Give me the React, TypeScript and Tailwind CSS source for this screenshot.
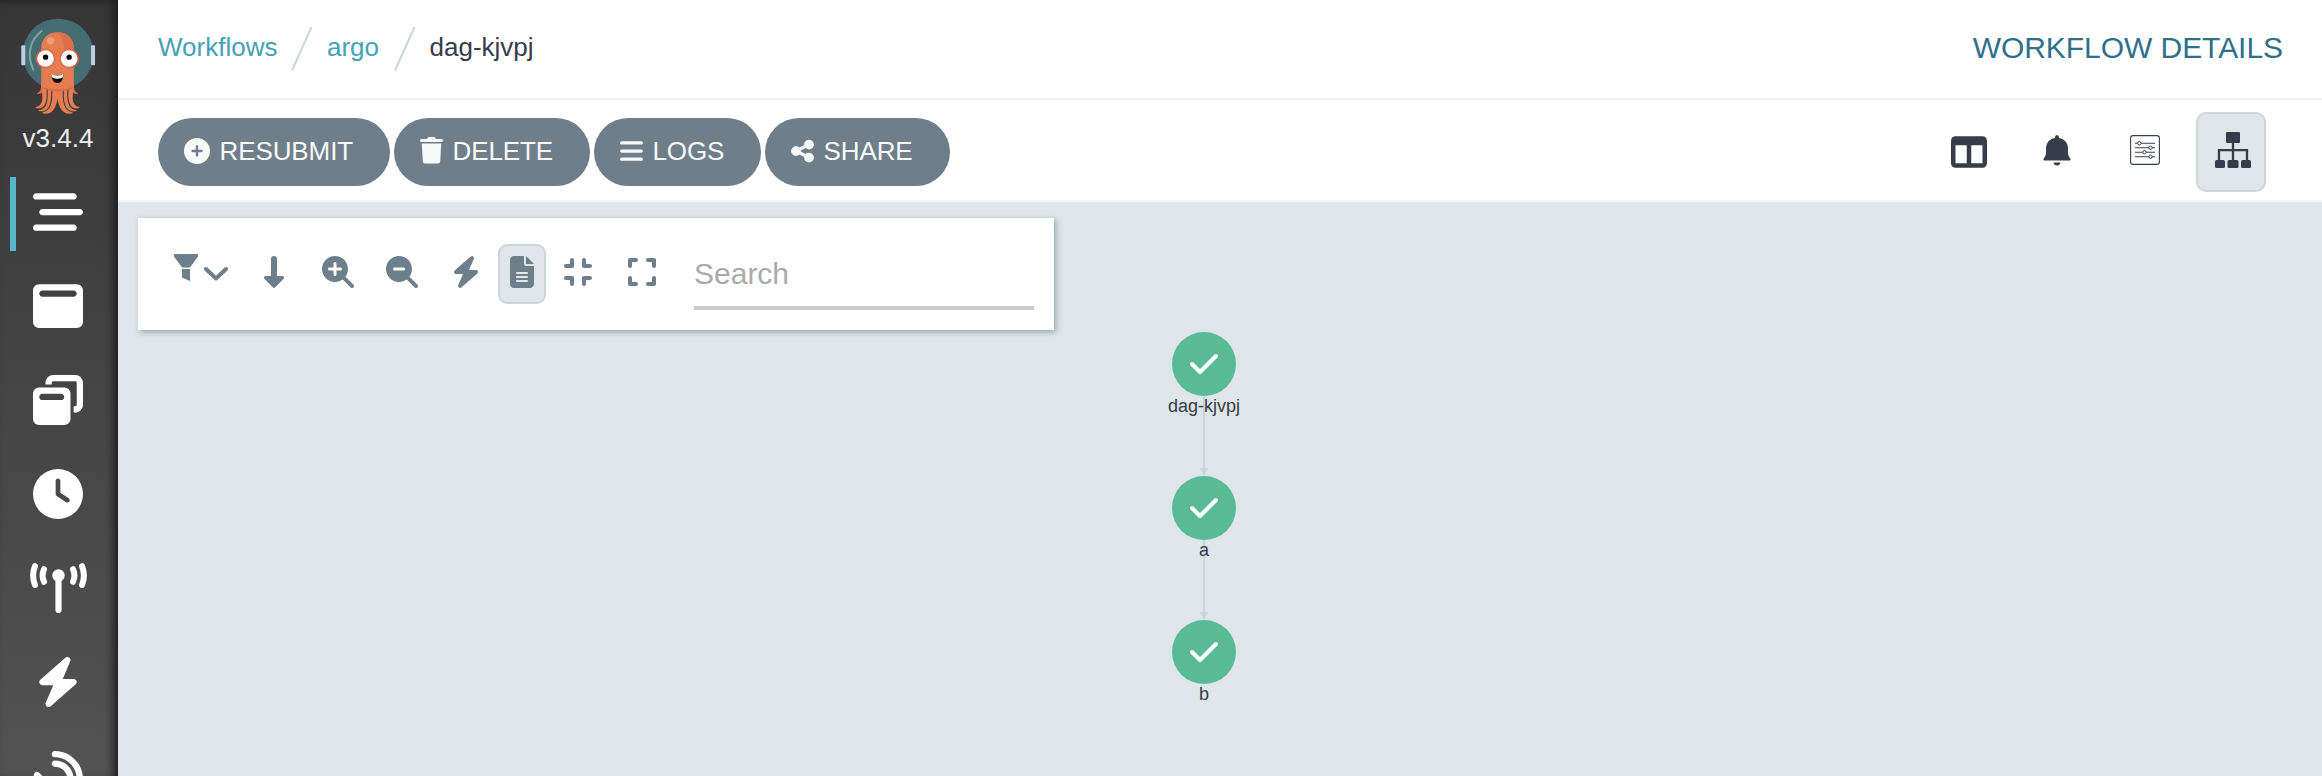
import type { ComponentType, ReactNode } from 'react';
import {
  FaBars,
  FaBarsStaggered,
  FaBolt,
  FaCirclePlus,
  FaClock,
  FaCompress,
  FaExpand,
  FaFileLines,
  FaMagnifyingGlassMinus,
  FaMagnifyingGlassPlus,
  FaSatelliteDish,
  FaShareNodes,
  FaTableColumns,
  FaWindowMaximize,
  FaWindowRestore,
} from 'react-icons/fa6';

function Tentacles() {
  return (
    <>
      <path d="M123 255C123 268 119 277 110 280C117 284 126 281 130 270Z" fill="#dc6849" />
      <path d="M123 250V262C128 292 131 316 106 321V324C136 331 141 306 139 266V250Z" />
      <path d="M137 250L142 266C144 302 142 328 115 330V333C150 339 154 308 153 266V250Z" />
      <path d="M150 250L156 266C158 308 152 333 127 337V340C158 346 168 322 173 292V250Z" />
    </>
  );
}

function Logo() {
  return (
    <svg viewBox="60 50 230 295" className="mt-[17px] ml-[20px] h-[98px] w-[77px] shrink-0">
      <circle cx="174" cy="162" r="107" fill="#486a78" />
      <circle cx="174" cy="162" r="102" fill="#466e70" />
      <rect x="63" y="135" width="12" height="60" rx="3" fill="#bccfe6" />
      <rect x="273" y="135" width="12" height="60" rx="3" fill="#bccfe6" />
      <path d="M124 92C86 122 80 168 99 208" fill="none" stroke="#79a8a3" strokeWidth="6" strokeLinecap="round" />
      <g fill="#e57d51">
        <path d="M123 146C123 114 143 96 172 96S221 114 221 146V266H123Z" />
        <Tentacles />
        <g transform="matrix(-1 0 0 1 344 0)">
          <Tentacles />
        </g>
      </g>
      <path d="M172 96C201 96 221 114 221 146V160L192 146C191 124 186 108 172 96Z" fill="#dc6f4b" />
      <path d="M124 263Q172 279 220 263" fill="none" stroke="#dc6849" strokeWidth="5" />
      <circle cx="151" cy="121" r="11" fill="#ee9d80" />
      <circle cx="135" cy="175" r="29" fill="#dc5f45" />
      <circle cx="208" cy="175" r="29" fill="#dc5f45" />
      <circle cx="136" cy="175" r="25" fill="#fff" />
      <circle cx="207" cy="175" r="25" fill="#fff" />
      <circle cx="136" cy="171" r="8" fill="#000" />
      <circle cx="207" cy="171" r="8" fill="#000" />
      <path d="M153 221Q172 233 190 221C189 239 182 249 172 249S154 239 153 221Z" fill="#000" />
      <path d="M153 221Q172 233 190 221L188 231Q172 241 155 231Z" fill="#fff" />
    </svg>
  );
}

function Antenna({ className }: { className?: string }) {
  return (
    <svg viewBox="0 0 57 50" className={className} fill="none" stroke="currentColor" strokeWidth="6" strokeLinecap="round">
      <path d="M5 3.200Q1.200 12.500 5 22M52 3.200Q55.800 12.500 52 22" />
      <path d="M14 6.200Q11.200 12.500 14 18.800M43 6.200Q45.800 12.500 43 18.800" />
      <path d="M28.500 14V47" strokeWidth="6.200" />
      <circle cx="28.500" cy="12.500" r="6.200" fill="currentColor" stroke="none" />
    </svg>
  );
}

const navItems: ComponentType<{ className?: string }>[] = [
  FaBarsStaggered,
  FaWindowMaximize,
  FaWindowRestore,
  FaClock,
  Antenna,
  FaBolt,
  FaSatelliteDish,
];

function Sidebar() {
  return (
    <nav className="flex h-[776px] w-[118px] shrink-0 flex-col overflow-hidden bg-gradient-to-b from-[#363636] to-[#535353] shadow-[inset_-10px_0_10px_-6px_#1c1c1c,inset_0_6px_8px_-6px_#222]">
      <Logo />
      <div className="mt-[7px] h-[43px] w-[116px] shrink-0 text-center text-[26px] leading-[32px] text-[#eef1f4]">v3.4.4</div>
      {navItems.map((NavIcon, i) => (
        <div key={i} className="flex h-[94px] shrink-0 items-center">
          <div className={i === 0 ? 'ml-[10px] mt-[4px] h-[74px] w-[6px] bg-[#5ab7cb]' : 'ml-[10px] h-[74px] w-[6px]'} />
          <div className="flex w-[84px] justify-center">
            <NavIcon className="h-[50px] w-auto text-white" />
          </div>
        </div>
      ))}
    </nav>
  );
}

function Slash() {
  return (
    <svg viewBox="0 0 22 46" className="h-[46px] w-[22px]">
      <path d="M1 44.5L20.5 1" stroke="#ccd6dd" strokeWidth="2" />
    </svg>
  );
}

function Trash({ className }: { className?: string }) {
  return (
    <svg viewBox="0 0 23 27" className={className} fill="currentColor">
      <path d="M7.500 1.200Q8 0 9 0H14Q15 0 15.500 1.200L16 2H21.500Q23 2 23 3.500T21.500 5H1.500Q0 5 0 3.500T1.500 2H7Z" />
      <path d="M1.800 6.500H21.200L20.200 24.500Q20.100 26.500 18 26.500H5Q2.900 26.500 2.800 24.500Z" />
    </svg>
  );
}

function Action({ width, icon, children }: { width: string; icon: ReactNode; children: string }) {
  return (
    <button className={`flex h-[68px] items-center rounded-full bg-[#6f7e89] pb-[3px] pl-[26px] text-[26px] text-[#f8fafa] ${width}`}>
      {icon}
      <span className="ml-[9.5px] pt-[2px] tracking-[-0.1px]">{children}</span>
    </button>
  );
}

function Bell() {
  return (
    <svg viewBox="0 0 28 31" className="h-[31px] w-[28px]" fill="#363c4a">
      <path d="M14 0Q16 0 16 2.500V3C22 4 25 8.500 25 14V18Q25 21 27.500 24Q28 25.500 26.500 25.500H1.500Q0 25.500 .5 24Q3 21 3 18V14C3 8.500 6 4 12 3V2.500Q12 0 14 0Z" />
      <path d="M10.500 27.500H17.500Q17 30.500 14 30.500T10.500 27.500Z" />
    </svg>
  );
}

function Sliders() {
  return (
    <svg viewBox="0 0 30 30" className="h-[30px] w-[30px]" fill="none" stroke="#363c4a">
      <rect x=".6" y=".6" width="28.800" height="28.800" rx="2.500" strokeWidth="1.100" />
      <path d="M5 8.300H25M5 12.700H25M5 17.200H25M5 21.700H25" strokeWidth="1.100" />
      <g fill="#fff" strokeWidth="1">
        <circle cx="9.300" cy="8.300" r="1.700" />
        <circle cx="20.500" cy="12.700" r="1.700" />
        <circle cx="14.500" cy="17.200" r="1.700" />
        <circle cx="20.500" cy="21.700" r="1.700" />
      </g>
    </svg>
  );
}

function Sitemap() {
  return (
    <svg viewBox="0 0 36 36" className="h-[36px] w-[36px]" fill="#363c4a">
      <rect x="11" y="0" width="14" height="11" rx="1" />
      <path d="M4 29V18.200H32V29M18 10V29" fill="none" stroke="#363c4a" strokeWidth="2.300" />
      <rect x="0" y="28" width="10" height="8" rx="1.500" />
      <rect x="12.500" y="28" width="11" height="8" rx="1.500" />
      <rect x="26" y="28" width="10" height="8" rx="1.500" />
    </svg>
  );
}

function Filter() {
  return (
    <svg viewBox="0 0 24 27" className="-mt-[9px] ml-[36px] h-[27px] w-[24px]" fill="currentColor">
      <path d="M0 0H24V2.500L16 13.500H8L0 2.500Z" />
      <path d="M8 15H16V27L8 23.500Z" />
    </svg>
  );
}

function Chevron() {
  return (
    <svg viewBox="0 0 24 14" className="mt-[3px] ml-[6px] h-[14px] w-[24px]" fill="none" stroke="currentColor">
      <path d="M2 2L12 11.500L22 2" strokeWidth="4" strokeLinecap="round" strokeLinejoin="round" />
    </svg>
  );
}

function ArrowDown() {
  return (
    <svg viewBox="0 0 20 32" className="ml-[36px] h-[32px] w-[20px]" fill="currentColor">
      <path d="M7 3Q7 0 10 0T13 3V20H18.500Q21 20.500 19.500 23L11.300 31.300Q10 32.500 8.700 31.300L.5 23Q-1 20.500 1.500 20H7Z" />
    </svg>
  );
}

function GraphPanel() {
  return (
    <div className="mt-[16px] ml-[20px] flex h-[112px] w-[916px] items-start bg-white text-[#6d7f8b] shadow-[2px_2px_6px_#8fa4b1]">
      <div className="flex h-[108px] items-center">
        <Filter />
        <Chevron />
        <ArrowDown />
        <FaMagnifyingGlassPlus className="ml-[38px] h-[32px] w-[32px]" />
        <FaMagnifyingGlassMinus className="ml-[32px] h-[32px] w-[32px]" />
        <FaBolt className="ml-[34px] h-[32px] w-[28px]" />
        <div className="mt-[4px] ml-[18px] flex h-[60px] w-[48px] justify-center rounded-[9px] border-2 border-[#ccd6dd] bg-[#dee6e9] pt-[10px]">
          <FaFileLines className="h-[32px] w-[24px]" />
        </div>
        <FaCompress className="ml-[18px] h-[32px] w-[28px]" />
        <FaExpand className="ml-[36px] h-[32px] w-[28px]" />
      </div>
      <input
        placeholder="Search"
        className="mt-[20px] ml-[38px] h-[72px] w-[340px] border-b-4 border-[#cacaca] bg-transparent pt-[4px] text-[30px] outline-none placeholder:text-[#aaaaaa]"
      />
    </div>
  );
}

function GraphNode({ label, place }: { label: string; place: string }) {
  return (
    <div className={`absolute left-[1036px] flex w-[100px] flex-col items-center ${place}`}>
      <svg viewBox="0 0 64 64" className="h-[64px] w-[64px]">
        <circle cx="32" cy="32" r="32" fill="#59ba97" />
        <path d="M20 32L28 40L44 24" fill="none" stroke="#fff" strokeWidth="4" strokeLinecap="round" strokeLinejoin="round" />
      </svg>
      <div className="text-[18px] leading-[20px] text-[#363c4a]">{label}</div>
    </div>
  );
}

function Edge({ place }: { place: string }) {
  return (
    <svg viewBox="0 0 8 80" className={`absolute left-[1082px] h-[80px] w-[8px] ${place}`} fill="#ccd4d8">
      <rect x="3" y="0" width="2" height="74" />
      <path d="M0 72H8L4 80Z" />
    </svg>
  );
}

export default function App() {
  return (
    <div className="flex h-[776px] w-[2322px] overflow-hidden bg-[#dee6e9] font-['Liberation_Sans',Arial,sans-serif]">
      <Sidebar />
      <main className="flex min-w-0 flex-1 flex-col">
        <header className="flex h-[100px] shrink-0 items-center justify-between border-b-2 border-[#edf2f6] bg-white pr-[39px] pl-[40px]">
          <div className="flex items-center text-[26px] text-[#45a1b4]">
            <a className="-mt-[3px] w-[133px]">Workflows</a>
            <Slash />
            <a className="-mt-[3px] ml-[14px] w-[67px]">argo</a>
            <Slash />
            <span className="-mt-[3px] ml-[13.500px] text-[#363c4a]">dag-kjvpj</span>
          </div>
          <h1 className="-mt-[4px] text-[30px] tracking-[-0.05px] text-[#2f6f8b]">WORKFLOW DETAILS</h1>
        </header>
        <div className="flex h-[102px] shrink-0 items-center justify-between border-b-2 border-[#edf2f6] bg-white pr-[56px] pl-[40px]">
          <div className="mt-[4px] flex gap-[4px]">
            <Action width="w-[232px]" icon={<FaCirclePlus className="h-[26px] w-[26px]" />}>RESUBMIT</Action>
            <Action width="w-[196px]" icon={<Trash className="h-[27px] w-[23px]" />}>DELETE</Action>
            <Action width="w-[167px]" icon={<FaBars className="h-[26px] w-[23px]" />}>LOGS</Action>
            <Action width="w-[185px]" icon={<FaShareNodes className="h-[26px] w-[23px]" />}>SHARE</Action>
          </div>
          <div className="mt-[4px] flex items-center">
            <FaTableColumns className="mr-[56px] h-[36px] w-[36px] text-[#363c4a]" />
            <div className="mr-[59px] -mt-[4px]"><Bell /></div>
            <div className="mr-[36px] -mt-[4px]"><Sliders /></div>
            <div className="flex h-[80px] w-[70px] justify-center rounded-[10px] border-2 border-[#ccd6dd] bg-[#dee6e9] pt-[18px] pl-[4px]">
              <Sitemap />
            </div>
          </div>
        </div>
        <section className="relative flex-1">
          <GraphPanel />
          <Edge place="top-[194px]" />
          <Edge place="top-[338px]" />
          <GraphNode label="dag-kjvpj" place="top-[130px]" />
          <GraphNode label="a" place="top-[274px]" />
          <GraphNode label="b" place="top-[418px]" />
        </section>
      </main>
    </div>
  );
}
